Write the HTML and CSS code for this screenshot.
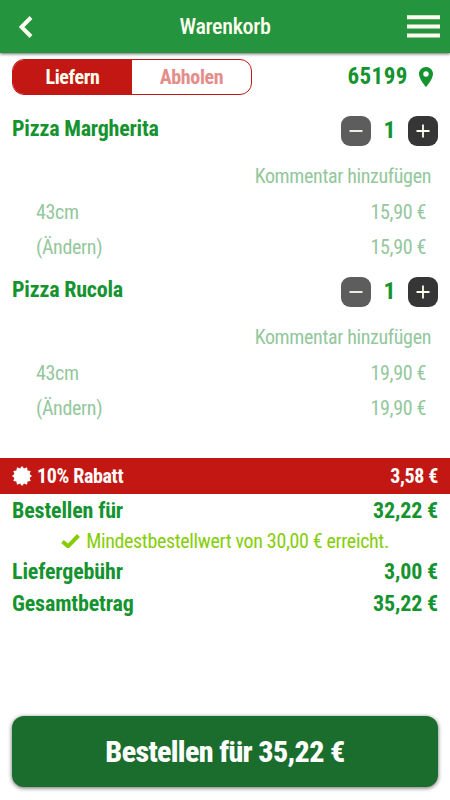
FILE: index.html
```html
<!DOCTYPE html>
<html lang="de">
<head>
<meta charset="utf-8">
<title>Warenkorb</title>
<link rel="stylesheet" href="styles.css">
</head>
<body>
<header class="bar">
  <svg class="back" viewBox="0 0 14 22"><path d="M12 1.5 2.5 11l9.500 9.500"/></svg>
  <h1 class="title">Warenkorb</h1>
  <svg class="menu" viewBox="0 0 33 23"><path d="M0 2.300h33M0 11.400h33M0 20.400h33"/></svg>
</header>
<main>
  <section class="mode">
    <div class="tabs"><span class="tab active">Liefern</span><span class="tab">Abholen</span></div>
    <div class="zip"><span>65199</span><svg class="pin" viewBox="5 2 14 20"><path fill-rule="evenodd" d="M12 2C8.130 2 5 5.130 5 9c0 5.250 7 13 7 13s7-7.750 7-13c0-3.870-3.130-7-7-7zm0 9.700A2.700 2.700 0 1 1 12 6.300a2.700 2.700 0 0 1 0 5.400z"/></svg></div>
  </section>
  <article class="item">
    <div class="head"><h2 class="name">Pizza Margherita</h2>
      <div class="qty"><button class="step minus"><svg viewBox="0 0 14 14"><path d="M0.500 7h13"/></svg></button><span class="count">1</span><button class="step"><svg viewBox="0 0 14 14"><path d="M0.500 7h13M7 .5v13"/></svg></button></div></div>
    <div class="comment"><span>Kommentar hinzufügen</span></div>
    <div class="option"><span>43cm</span><span>15,90 €</span></div>
    <div class="option"><span>(Ändern)</span><span>15,90 €</span></div>
  </article>
  <article class="item">
    <div class="head"><h2 class="name">Pizza Rucola</h2>
      <div class="qty"><button class="step minus"><svg viewBox="0 0 14 14"><path d="M0.500 7h13"/></svg></button><span class="count">1</span><button class="step"><svg viewBox="0 0 14 14"><path d="M0.500 7h13M7 .5v13"/></svg></button></div></div>
    <div class="comment"><span>Kommentar hinzufügen</span></div>
    <div class="option"><span>43cm</span><span>19,90 €</span></div>
    <div class="option"><span>(Ändern)</span><span>19,90 €</span></div>
  </article>
  <section class="totals">
    <div class="discount"><svg class="badge" viewBox="-10 -10 20 20"><path d="M0-10 2-7.600 5-8.700 5.600-5.600 8.700-5 7.600-2 10 0 7.600 2 8.700 5 5.600 5.600 5 8.700 2 7.600 0 10-2 7.600-5 8.700-5.600 5.600-8.700 5-7.600 2-10 0-7.600-2-8.700-5-5.600-5.600-5-8.700-2-7.600z"/></svg><span class="label">10% Rabatt</span><span>3,58 €</span></div>
    <div class="sum"><span>Bestellen für</span><span>32,22 €</span></div>
    <div class="notice"><svg class="check" viewBox="0 0 19 14"><path d="M1.500 7.500 7 12.300 17.500 1.500"/></svg><span>Mindestbestellwert von 30,00 € erreicht.</span></div>
    <div class="sum"><span>Liefergebühr</span><span>3,00 €</span></div>
    <div class="sum last"><span>Gesamtbetrag</span><span>35,22 €</span></div>
  </section>
</main>
<button class="order">Bestellen für 35,22 €</button>
</body>
</html>
```

FILE: styles.css
```css
* { box-sizing: border-box; }
body {
  margin: 0; height: 800px; display: flex; flex-direction: column; background: #fff;
  font-family: "Roboto Condensed", Roboto, sans-serif; font-stretch: 75%;
  font-size: 20px; line-height: 24px; letter-spacing: -.35px; color: #14932f;
}
button { font: inherit; border: 0; padding: 0; }
h1, h2 { margin: 0; }
svg { display: block; flex: none; }
.bar { height: 53px; display: flex; align-items: center; justify-content: space-between; padding: 0 10px 0 19px; background: #25943f; box-shadow: 0 1px 3px rgba(0,0,0,.6); color: #fffff0; }
.back { width: 14px; height: 22px; margin-right: 10px; }
.bar path { fill: none; stroke: #fffff0; stroke-width: 4; }
.title { font-size: 22px; font-weight: 500; letter-spacing: -.3px; }
.menu { width: 33px; height: 23px; margin-top: -1px; }
.mode { display: flex; justify-content: space-between; align-items: center; padding: 6px 17px 0 12px; }
.tabs { width: 240px; height: 36px; display: flex; border: 1px solid #c31713; border-radius: 12px; overflow: hidden; font-weight: 700; }
.tab { flex: 1; text-align: center; line-height: 34px; color: #e58d8a; }
.active { background: #c31713; color: #fffff0; }
.zip { display: flex; align-items: center; gap: 11px; font-size: 23px; font-weight: 700; letter-spacing: .5px; }
.pin { width: 14px; height: 20px; fill: #14932f; }
.item { height: 160.5px; padding: 21px 12px 0; }
.head { display: flex; justify-content: space-between; height: 30px; }
.name { padding-top: 1px; font-size: 22px; font-weight: 700; letter-spacing: -.2px; }
.qty { display: flex; }
.step { width: 30px; height: 30px; border-radius: 9px; background: #363636; display: grid; place-items: center; }
.minus { background: #5d5d5d; }
.step svg { width: 14px; height: 14px; stroke: #fffff0; stroke-width: 1.8; }
.count { width: 37px; text-align: center; font-size: 24px; font-weight: 700; line-height: 28px; }
.comment { display: flex; justify-content: flex-end; padding: 18px 7px 0 0; color: #93c79c; }
.option { display: flex; justify-content: space-between; padding: 12px 12px 0 24px; color: #93c79c; }
.option + .option { padding-top: 11px; }
.totals { padding-top: 42px; font-weight: 700; }
.discount { display: flex; align-items: center; height: 36px; padding: 0 12px; background: #c31713; color: #fff; }
.badge { width: 20px; height: 20px; margin-right: 5px; fill: #fff; }
.label { flex: 1; }
.sum { display: flex; justify-content: space-between; padding: 5px 12px 3px; font-size: 22px; letter-spacing: -.15px; }
.notice { display: flex; justify-content: center; align-items: center; gap: 6px; height: 29px; font-weight: 400; color: #86cd08; }
.check { width: 19px; height: 14px; fill: none; stroke: #86cd08; stroke-width: 4; }
.order { margin: auto 12px 13px; height: 71px; border-radius: 12px; background: #1a6d2c; color: #fff; font-size: 30px; font-weight: 800; letter-spacing: -.65px; box-shadow: 0 1px 4px rgba(0,0,0,.6); }
```
